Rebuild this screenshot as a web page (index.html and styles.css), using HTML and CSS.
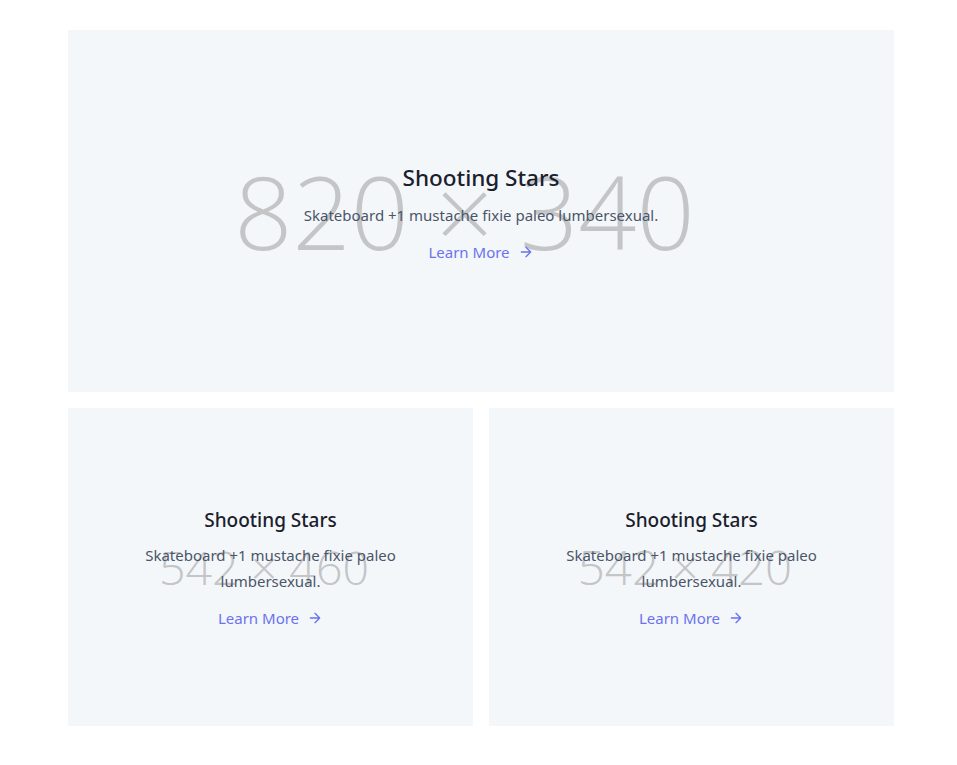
FILE: index.html
```html
<!DOCTYPE html>
<html>
<head>
<meta charset="utf-8">
<link rel="stylesheet" href="styles.css">
</head>
<body>
<section class="gallery">
  <div class="card card-wide">
    <div class="ph ph-lg">820 × 340</div>
    <div class="content content-wide">
      <h2 class="title title-lg">Shooting Stars</h2>
      <p class="desc">Skateboard +1 mustache fixie paleo lumbersexual.</p>
      <a class="link" href="#">Learn More
        <svg viewBox="0 0 24 24" fill="none" stroke="currentColor" stroke-width="2" stroke-linecap="round" stroke-linejoin="round"><path d="M5 12h14M12 5l7 7-7 7"/></svg>
      </a>
    </div>
  </div>
  <div class="row">
    <div class="card card-half">
      <div class="ph ph-sm ph-narrow">542 × 460</div>
      <div class="content content-half">
        <h2 class="title">Shooting Stars</h2>
        <p class="desc">Skateboard +1 mustache fixie paleo lumbersexual.</p>
        <a class="link" href="#">Learn More
          <svg viewBox="0 0 24 24" fill="none" stroke="currentColor" stroke-width="2" stroke-linecap="round" stroke-linejoin="round"><path d="M5 12h14M12 5l7 7-7 7"/></svg>
        </a>
      </div>
    </div>
    <div class="card card-half">
      <div class="ph ph-sm">542 × 420</div>
      <div class="content content-half">
        <h2 class="title">Shooting Stars</h2>
        <p class="desc">Skateboard +1 mustache fixie paleo lumbersexual.</p>
        <a class="link" href="#">Learn More
          <svg viewBox="0 0 24 24" fill="none" stroke="currentColor" stroke-width="2" stroke-linecap="round" stroke-linejoin="round"><path d="M5 12h14M12 5l7 7-7 7"/></svg>
        </a>
      </div>
    </div>
  </div>
</section>
</body>
</html>
```
FILE: styles.css
```css
html, body {
  margin: 0;
  padding: 0;
  background: #ffffff;
}
body {
  font-family: "Noto Sans", "Open Sans", sans-serif;
}
.gallery {
  width: 826px;
  margin: 30px 0 0 68px;
  display: flex;
  flex-direction: column;
  gap: 16px;
}
.row {
  display: grid;
  grid-template-columns: 1fr 1fr;
  gap: 16px;
}
.card {
  position: relative;
  background: #f4f7fa;
  display: flex;
  align-items: center;
  justify-content: center;
  overflow: hidden;
}
.card-wide {
  height: 362px;
}
.card-half {
  height: 318px;
}
.ph {
  position: absolute;
  left: 0;
  right: 0;
  top: 50%;
  transform: translateY(-50%);
  text-align: center;
  font-family: "Open Sans", sans-serif;
  font-weight: 300;
  color: #c3c5c7;
  white-space: nowrap;
  line-height: 1;
}
.ph-lg {
  font-size: 102px;
  margin-left: -33px;
}
.ph-sm {
  font-size: 47.5px;
  margin-left: -13px;
}
.ph-narrow {
  font-size: 46.5px;
}
.content {
  position: relative;
  text-align: center;
  padding: 0 48px;
}
.content-wide {
  padding-top: 4px;
}
.content-half {
  padding-top: 2px;
}
.title {
  margin: 0 0 8px;
  font-size: 19px;
  line-height: 28px;
  font-weight: 500;
  color: #1a202c;
}
.title-lg {
  font-size: 22.5px;
  line-height: 32px;
}
.desc {
  margin: 0 0 12px;
  font-size: 15px;
  line-height: 26px;
  color: #4a5568;
}
.link {
  display: inline-flex;
  align-items: center;
  font-size: 15px;
  line-height: 24px;
  color: #6b72ef;
  text-decoration: none;
}
.link svg {
  width: 16px;
  height: 16px;
  margin-left: 8px;
}
```
